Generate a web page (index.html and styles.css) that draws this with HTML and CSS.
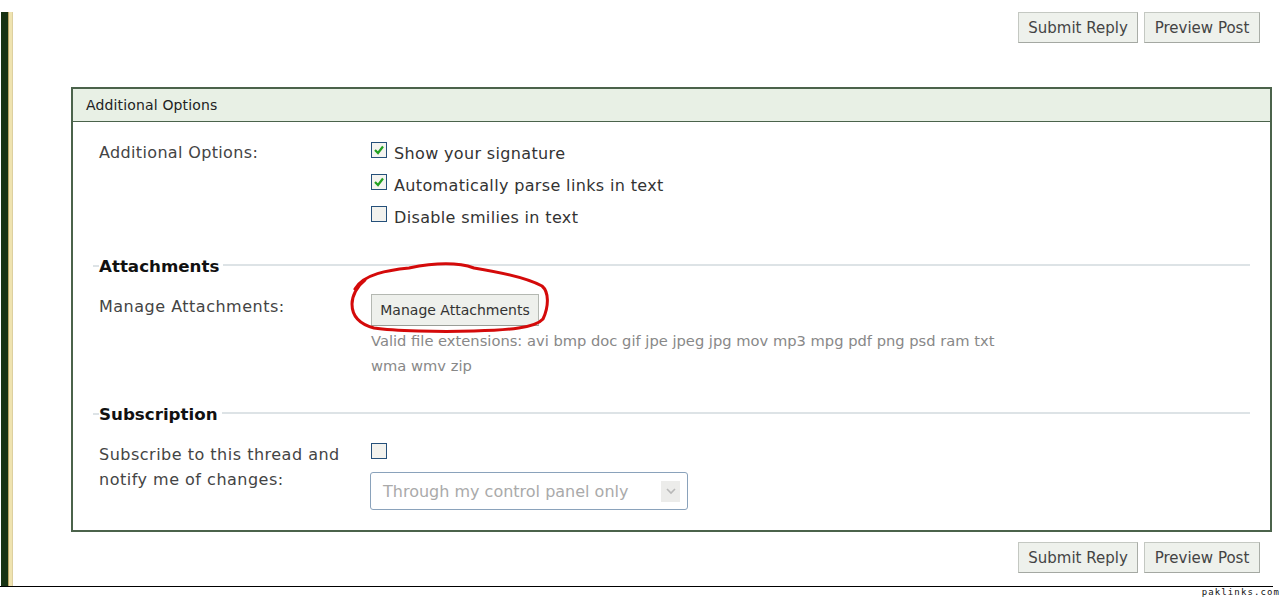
FILE: index.html
```html
<!DOCTYPE html>
<html>
<head>
<meta charset="utf-8">
<link rel="stylesheet" href="styles.css">
</head>
<body>
<div class="frame">
  <div class="stripe"></div>
  <div class="main">
    <div class="actions">
      <button class="btn">Submit Reply</button>
      <button class="btn">Preview Post</button>
    </div>
    <div class="panel">
      <div class="panel-head">Additional Options</div>
      <div class="panel-body">
        <div class="row row-options">
          <div class="label">Additional Options:</div>
          <div class="control checks">
            <label class="check"><svg class="box" viewBox="0 0 16 16"><rect x="0.5" y="0.5" width="15" height="15" fill="#f4f4f0" stroke="#25507a"/><polyline points="4,8 7,11 12,4.5" fill="none" stroke="#22a022" stroke-width="2.2"/></svg>Show your signature</label>
            <label class="check"><svg class="box" viewBox="0 0 16 16"><rect x="0.5" y="0.5" width="15" height="15" fill="#f4f4f0" stroke="#25507a"/><polyline points="4,8 7,11 12,4.5" fill="none" stroke="#22a022" stroke-width="2.2"/></svg>Automatically parse links in text</label>
            <label class="check"><svg class="box" viewBox="0 0 16 16"><rect x="0.5" y="0.5" width="15" height="15" fill="#f2f2ee" stroke="#25507a"/></svg>Disable smilies in text</label>
          </div>
        </div>

        <h3 class="section">Attachments</h3>
        <div class="row row-attach">
          <div class="label">Manage Attachments:</div>
          <div class="control">
            <div class="attach-wrap">
              <button class="btn btn-small">Manage Attachments</button>
              <svg class="circle" viewBox="0 0 205 75"><path d="M6 27 C14 12 40 8 60 6 C80 2 105 -1 125 6 C150 10 178 16 193 24 C200 30 200 44 194 57 C186 66 160 68 125 69 C90 70 45 69 25 66 C10 62 3 54 3 42 C3 34 8 24 16 18" fill="none" stroke="#d40a0a" stroke-width="3" stroke-linecap="round"/></svg>
            </div>
            <p class="extensions">Valid file extensions: avi bmp doc gif jpe jpeg jpg mov mp3 mpg pdf png psd ram txt wma wmv zip</p>
          </div>
        </div>

        <h3 class="section section-sub">Subscription</h3>
        <div class="row row-sub">
          <div class="label">Subscribe to this thread and notify me of changes:</div>
          <div class="control">
            <svg class="box box-sub" viewBox="0 0 16 16"><rect x="0.5" y="0.5" width="15" height="15" fill="#f2f2ee" stroke="#25507a"/></svg>
            <div class="select">
              <span>Through my control panel only</span>
              <span class="arrow"><svg viewBox="0 0 12 8"><polyline points="2,2 6,6 10,2" fill="none" stroke="#b8b8b8" stroke-width="1.6"/></svg></span>
            </div>
          </div>
        </div>
      </div>
    </div>
    <div class="actions actions-bottom">
      <button class="btn">Submit Reply</button>
      <button class="btn">Preview Post</button>
    </div>
  </div>
</div>
<div class="credit">paklinks.com</div>
</body>
</html>
```

FILE: styles.css
```css
* { box-sizing: border-box; }
body {
  margin: 0;
  background: #fff;
  font-family: "DejaVu Sans", sans-serif;
  color: #333;
}
.frame {
  display: flex;
  width: 1273px;
  height: 587px;
  border-bottom: 1px solid #000;
}
.stripe {
  width: 14px;
  margin-top: 12px;
  background: linear-gradient(to right, #fff 0 1px, #173212 1px 8px, #b9a464 8px 9px, #efe3b0 9px 12px, #ddd0a0 12px 13px, #fff 13px);
}
.main {
  flex: 1;
  padding: 12px 0 0 57px;
  display: flex;
  flex-direction: column;
}
.actions {
  display: flex;
  justify-content: flex-end;
  gap: 6px;
  padding-right: 13px;
}
.actions-bottom { margin-top: 10px; }
.btn {
  font-family: inherit;
  font-size: 15px;
  color: #444;
  height: 31px;
  padding: 0;
  background: #eef1ec;
  border: 1px solid #c4c8c2;
  border-right-color: #a9ada7;
  border-bottom-color: #a4a8a2;
}
.actions .btn:first-child { width: 120px; }
.actions .btn:last-child { width: 116px; }
.panel {
  margin-top: 44px;
  width: 1201px;
  height: 445px;
  border: 2px solid #4b634b;
}
.panel-head {
  height: 33px;
  line-height: 32px;
  background: #e8f0e5;
  border-bottom: 1px solid #4b634b;
  padding-left: 13px;
  font-size: 14px;
  letter-spacing: 0.15px;
  color: #222;
}
.panel-body {
  padding: 15px 20px 0;
}
.row {
  display: grid;
  grid-template-columns: 278px 1fr;
  font-size: 16px;
}
.label {
  padding-left: 6px;
  color: #444;
  letter-spacing: 0.5px;
}
.row-options .label { line-height: 32px; letter-spacing: 0.35px; }
.checks { display: flex; flex-direction: column; }
.check {
  display: flex;
  align-items: center;
  height: 32px;
  color: #333;
  letter-spacing: 0.35px;
}
.box {
  width: 16px;
  height: 16px;
  margin-right: 7px;
  margin-top: -7px;
  flex: none;
}
.section {
  display: flex;
  align-items: center;
  margin: 21px 0 0;
  height: 24px;
  font-size: 16.7px;
  font-weight: bold;
  color: #111;
}
.section-sub { margin-top: 24px; }
.section::before {
  content: "";
  width: 6px;
  border-top: 2px solid #dde3e6;
}
.section::after {
  content: "";
  flex: 1;
  margin-left: 4px;
  border-top: 2px solid #dde3e6;
  margin-top: -2px;
}
.row-attach { margin-top: 16px; }
.row-attach .label { padding-top: 0; line-height: 26px; }
.attach-wrap { position: relative; width: 168px; }
.btn-small {
  height: 32px;
  width: 168px;
  padding: 0;
  font-size: 14px;
  color: #333;
  background: #eef0ec;
  border: 1px solid #b4b8b2;
  border-bottom-color: #999d97;
}
.circle {
  position: absolute;
  left: -22px;
  top: -32px;
  width: 205px;
  height: 75px;
  overflow: visible;
  pointer-events: none;
}
.extensions {
  margin: 2px 0 0;
  width: 640px;
  font-size: 14.7px;
  line-height: 25px;
  color: #888;
}
.row-sub { margin-top: 16px; }
.row-sub .label { line-height: 25px; width: 260px; }
.box-sub { display: block; margin: 1px 0 0; }
.select {
  margin-top: 13px;
  margin-left: -1px;
  width: 318px;
  height: 38px;
  border: 1px solid #8aa2bb;
  border-radius: 3px;
  display: flex;
  align-items: center;
  justify-content: space-between;
  padding: 0 7px 0 12px;
  color: #aaa;
  font-size: 16px;
}
.arrow {
  width: 19px;
  height: 21px;
  background: #ececea;
  display: flex;
  align-items: center;
  justify-content: center;
}
.arrow svg { width: 12px; height: 8px; }
.credit {
  width: 1283px;
  text-align: right;
  padding-right: 3px;
  font-family: "DejaVu Sans Mono", monospace;
  font-size: 9px;
  letter-spacing: 1.1px;
  color: #111;
  line-height: 11px;
}
```
